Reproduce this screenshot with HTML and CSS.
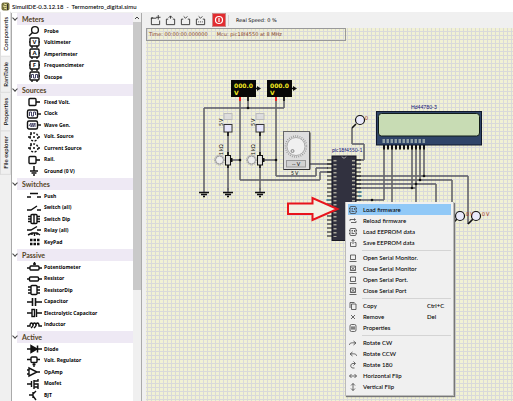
FILE: index.html
```html
<!DOCTYPE html>
<html lang="en">
<head>
<meta charset="utf-8">
<title>SimulIDE-0.3.12.18 - Termometro_digital.simu</title>
<link rel="stylesheet" href="styles.css">
</head>
<body>
<svg class="symbols" aria-hidden="true">
  <symbol id="probe" viewBox="0 0 16 12"><circle cx="9" cy="5" r="3.4"/><path d="M6.500 7.500L3 11"/></symbol>
  <symbol id="meter" viewBox="0 0 16 12"><rect x="4" y="1" width="9" height="8" rx="1"/><path d="M6 9v2M11 9v2M3 5h1M13 5h1"/></symbol>
  <symbol id="pulse" viewBox="0 0 16 12"><path class="thin" d="M5.500 7V3.500h2V7h2V3.500h2V7"/></symbol>
  <symbol id="fixed" viewBox="0 0 16 12"><rect x="3" y="2.500" width="7" height="7" rx="1"/><path d="M10 6h4" stroke-width="1.600"/></symbol>
  <symbol id="clock" viewBox="0 0 16 12"><rect x="1.500" y="2" width="10" height="8" rx="1.500"/><path d="M12 6h3"/><path class="thin" d="M3.500 8V4h2v4h2V4h2v3"/></symbol>
  <symbol id="wave" viewBox="0 0 16 12"><rect x="1.500" y="2" width="10" height="8" rx="1.500"/><path d="M12 6h3"/><path class="thin" d="M3 7l2-3v4l2-4v4l2-4v4"/></symbol>
  <symbol id="source" viewBox="0 0 16 12"><circle cx="8" cy="6" r="4" stroke-dasharray="2 1.500"/><path d="M2 6h3M7 6h2M12 6h2M5 1v2"/></symbol>
  <symbol id="ground" viewBox="0 0 16 12"><path d="M8 1v5M4 6h8M5.500 8h5M7 10h2" stroke-width="1.500"/></symbol>
  <symbol id="push" viewBox="0 0 16 12"><path d="M1 7h4M11 7h4M4 3.500h8"/></symbol>
  <symbol id="switch" viewBox="0 0 16 12"><path d="M1 8h4l6-4M11 8h4"/></symbol>
  <symbol id="dip" viewBox="0 0 16 12"><rect x="5" y="1.500" width="6" height="9" rx="1"/><path d="M2 3.500h3M2 6h3M2 8.500h3M11 3.500h3M11 6h3M11 8.500h3M8 2v8"/></symbol>
  <symbol id="relay" viewBox="0 0 16 12"><path d="M1 5h4l6-3.500M11 5h4M2 10l4-2h5l3 2M6 8v2M8.500 8v3M11 8v2"/></symbol>
  <symbol id="keypad" viewBox="0 0 16 12"><path d="M4 4h2.500M7.500 4H10M11 4h2.500M4 8h2.500M7.500 8H10M11 8h2.500" stroke-width="2.500"/></symbol>
  <symbol id="pot" viewBox="0 0 16 12"><rect x="4" y="5" width="9" height="4" rx="1"/><path d="M1 7h3M13 7h3M8.500 1v3M7 3h3"/></symbol>
  <symbol id="resistor" viewBox="0 0 16 12"><rect x="3.500" y="4" width="9" height="4" rx="1"/><path d="M1 6h2.500M12.500 6H16"/></symbol>
  <symbol id="resdip" viewBox="0 0 16 12"><rect x="5" y="1.500" width="6" height="9" rx="1"/><path d="M2 3h3M2 6h3M2 9h3M11 3h3M11 6h3M11 9h3"/></symbol>
  <symbol id="cap" viewBox="0 0 16 12"><path d="M1 6h5M10 6h6M6.500 2v8M9.500 2v8" stroke-width="1.600"/></symbol>
  <symbol id="ecap" viewBox="0 0 16 12"><rect x="6" y="2.500" width="2.500" height="7"/><path d="M1 6h5M10.500 6H16M10.500 2v8"/></symbol>
  <symbol id="coil" viewBox="0 0 16 12"><path d="M1 7h3c0-4 3-4 3 0c0-4 3-4 3 0c0-4 3-4 3 0h3M5 9l2-2M8 9l2-2"/></symbol>
  <symbol id="diode" viewBox="0 0 16 12"><path d="M1 6h15M11.500 2.500v7" stroke-width="1.500"/><path class="solid" d="M5 2.500L11 6L5 9.500z"/></symbol>
  <symbol id="reg" viewBox="0 0 16 12"><rect x="5" y="2" width="6" height="5.500" rx="1"/><path d="M1 4.500h4M11 4.500h3M8 8v4M6.500 9.500h3"/></symbol>
  <symbol id="opamp" viewBox="0 0 16 12"><path d="M3 2v8l8-4zM1 4h2M1 8h2M11 6h3"/></symbol>
  <symbol id="mosfet" viewBox="0 0 16 12"><path d="M1 6h4M5.500 3v6M8 2v9M8 3h4V1M8 6h4v5M8 9h4"/></symbol>
  <symbol id="bjt" viewBox="0 0 16 12"><path d="M3 6h4M7 3v6M7 5l3-3M7 7l3 4"/></symbol>
  <symbol id="new" viewBox="0 0 12 12"><path d="M7 3.500H1.500v7h9V6M1.500 4.500V3h2M9 0v5M6.500 2.500h5"/></symbol>
  <symbol id="open" viewBox="0 0 12 12"><path d="M3.500 4.500h-2v6h9v-6h-2M4 3l2-2l2 2M6 1v3"/></symbol>
  <symbol id="save" viewBox="0 0 12 12"><path d="M3.500 4.500h-2v6h9v-6h-2M4 1.500l2 2l2-2"/></symbol>
  <symbol id="saveas" viewBox="0 0 12 12"><path d="M3.500 4.500h-2v6h9v-6h-2M4 1.500l2 2l2-2M3.500 7.500h1M5.500 7.500h1M7.500 7.500h1"/></symbol>
  <symbol id="chip" viewBox="0 0 8 8"><rect x="1" y=".5" width="6" height="7" rx="1"/><path d="M2.500 2.500h1.500M2.500 4h1.500M2.500 5.500h3M5.500 2v2M0 2.500h1M0 5.500h1M7 2.500h1M7 5.500h1"/></symbol>
  <symbol id="reload" viewBox="0 0 8 8"><path d="M1 4V2.500h5M7 4v1.500H2M5 1.500l1.500 1L5 3.500"/></symbol>
  <symbol id="export" viewBox="0 0 8 8"><path d="M2.500 3.500h-1v4h5.500v-4H5.500M4 5V.5M2.500 2L4 .5L5.500 2"/></symbol>
  <symbol id="screen" viewBox="0 0 8 8"><path d="M1.500 1h5v4.500h-5zM.5 7.500h7"/></symbol>
  <symbol id="noscreen" viewBox="0 0 8 8"><path d="M1.500 1h5v4.500h-5zM.5 7.500h7M2 1.500l4 4M6 1.500l-4 4"/></symbol>
  <symbol id="copy" viewBox="0 0 8 8"><path d="M2.500 2h4.500v5.500H2.500zM1 6V.5h4.500"/></symbol>
  <symbol id="remove" viewBox="0 0 8 8"><path d="M2 2l4 4M6 2L2 6"/></symbol>
  <symbol id="props" viewBox="0 0 8 8"><rect x="1" y=".5" width="6" height="7" rx="1.500"/><path d="M3 2v4M5 2v4M2 4h4"/></symbol>
  <symbol id="cw" viewBox="0 0 8 8"><path d="M.5 6c0-2 1.500-2.500 6-2M4.500 2L7 4L4.500 6"/></symbol>
  <symbol id="ccw" viewBox="0 0 8 8"><path d="M7.500 6c0-2-1.500-2.500-6-2M3.500 2L1 4l2.500 2"/></symbol>
  <symbol id="half" viewBox="0 0 8 8"><path d="M6 2.500H4c-3 0-3 4.500 0 4.500h1.500M4.500.5l2 2l-2 2"/></symbol>
  <symbol id="hflip" viewBox="0 0 8 8"><path d="M.5 4h7M2.500 2l-2 2l2 2M5.500 2l2 2l-2 2"/></symbol>
  <symbol id="vflip" viewBox="0 0 8 8"><path d="M4 .5v7M2 2.500l2-2l2 2M2 5.500l2 2l2-2"/></symbol>
</svg>

<header class="titlebar">
  <svg class="logo" viewBox="0 0 9 9"><rect x=".5" y=".5" width="8" height="8" rx="2" fill="#77733f"/><path d="M3 2l3 1M2 4l4 1M3 6l3 1" stroke="#eee8a0" fill="none"/><path d="M6.500 2v6" stroke="#333"/></svg>
  <h1>SimulIDE-0.3.12.18 &nbsp;- &nbsp;Termometro_digital.simu</h1>
</header>

<main class="workspace">
  <nav class="tabs" aria-label="Panels">
    <button class="tab active">Components</button>
    <button class="tab">RamTable</button>
    <button class="tab">Properties</button>
    <button class="tab">File explorer</button>
  </nav>

  <aside class="panel">
    <div class="tree">
      <details open><summary>Meters</summary><ul>
        <li><svg><use href="#probe"/></svg>Probe</li>
        <li><svg><use href="#meter"/><text x="8.500" y="7">V</text></svg>Voltimeter</li>
        <li><svg><use href="#meter"/><text x="8.500" y="7">A</text></svg>Amperimeter</li>
        <li><svg><use href="#meter"/><text x="8.500" y="7">F</text></svg>Frequencimeter</li>
        <li><svg><use href="#meter"/><use href="#pulse"/></svg>Oscope</li>
      </ul></details>
      <details open><summary>Sources</summary><ul>
        <li><svg><use href="#fixed"/></svg>Fixed Volt.</li>
        <li><svg><use href="#clock"/></svg>Clock</li>
        <li><svg><use href="#wave"/></svg>Wave Gen.</li>
        <li><svg><use href="#source"/></svg>Volt. Source</li>
        <li><svg><use href="#source"/></svg>Current Source</li>
        <li><svg><use href="#fixed"/></svg>Rail.</li>
        <li><svg><use href="#ground"/></svg>Ground (0 V)</li>
      </ul></details>
      <details open><summary>Switches</summary><ul>
        <li><svg><use href="#push"/></svg>Push</li>
        <li><svg><use href="#switch"/></svg>Switch (all)</li>
        <li><svg><use href="#dip"/></svg>Switch Dip</li>
        <li><svg><use href="#relay"/></svg>Relay (all)</li>
        <li><svg><use href="#keypad"/></svg>KeyPad</li>
      </ul></details>
      <details open><summary>Passive</summary><ul>
        <li><svg><use href="#pot"/></svg>Potentiometer</li>
        <li><svg><use href="#resistor"/></svg>Resistor</li>
        <li><svg><use href="#resdip"/></svg>ResistorDip</li>
        <li><svg><use href="#cap"/></svg>Capacitor</li>
        <li><svg><use href="#ecap"/></svg>Electrolytic Capacitor</li>
        <li><svg><use href="#coil"/></svg>Inductor</li>
      </ul></details>
      <details open><summary>Active</summary><ul>
        <li><svg><use href="#diode"/></svg>Diode</li>
        <li><svg><use href="#reg"/></svg>Volt. Regulator</li>
        <li><svg><use href="#opamp"/></svg>OpAmp</li>
        <li><svg><use href="#mosfet"/></svg>Mosfet</li>
        <li><svg><use href="#bjt"/></svg>BJT</li>
      </ul></details>
    </div>
    <div class="scrollbar"><svg viewBox="0 0 8 9"><path d="M2 6l2-2l2 2" fill="none" stroke="#444"/></svg><div class="thumb"></div></div>
  </aside>

  <section class="editor">
    <div class="toolbar">
      <button aria-label="New"><svg><use href="#new"/></svg></button>
      <button aria-label="Open"><svg><use href="#open"/></svg></button>
      <button aria-label="Save"><svg><use href="#save"/></svg></button>
      <button aria-label="Save as"><svg><use href="#saveas"/></svg></button>
      <button class="power" aria-label="Power"><svg viewBox="0 0 12 12"><circle cx="6" cy="6" r="3.500"/><path d="M6 4v4"/></svg></button>
      <span class="speed">Real Speed: 0 %</span>
    </div>

    <div class="canvas">
      <div class="status"><span>Time: 00:00:00.000000</span><span>Mcu: pic18f4550 at 8 MHz</span></div>
      <svg class="circuit" viewBox="146 28 367 373">
        <defs>
          <g id="gnd"><path d="M0 0v4" class="wire"/><path class="pin" d="M-5 4.500h10M-3 6.500h6M-1 8.500h2"/></g>
          <g id="volt"><path d="M9 17v8M17 17v11" class="wire"/><path d="M9 17v4" stroke="#e22" stroke-width="2"/><path d="M17 17v4" class="pin"/><rect width="25" height="17" fill="#080808"/><path d="M25 8.500h2" class="pin"/><path d="M26 6v5l4-2.500z"/><text class="led" x="3" y="8">000.0</text><text class="led" x="3" y="15">V</text></g>
          <g id="supply">
            <rect x="-4" y="113.500" width="8" height="6" fill="#ddd" stroke="#bbb"/>
            <path class="wire" d="M0 132v58"/>
            <rect x="-4" y="124.500" width="8" height="7.500" fill="#e6e6fa" stroke="#333"/>
            <path d="M0 132v4M0 152v3M0 165v3" class="pin"/>
            <rect x="-2.500" y="155.500" width="5" height="9.500" fill="#e0e0dc" stroke="#111"/>
            <circle cx="-8.500" cy="160" r="5" fill="#ddd" stroke="#999" stroke-dasharray="1 1"/>
            <circle cx="-8.500" cy="160" r="4" fill="#eee" stroke="#999"/>
            <path d="M4 158v4l-2-2z" stroke="#111"/>
            <text class="tiny" transform="translate(-5 126) rotate(-90)">5 V</text>
            <text class="tiny" transform="translate(-5 155) rotate(-90)">1 kΩ</text>
            <use href="#gnd" y="188"/>
          </g>
        </defs>
        <path class="line" d="M204 108h80M240 180h80M276 176h40M309 164h23M320 172h12M316 168h12M356 176h112M356 180h96M356 184h80M356 188h60M356 200h28M352 144h12M356 160h8M230 160h10M262 160h14"/>
        <path class="wire" d="M204 108v80M240 105v75M276 105v71M320 180v-8M316 176v-8M364 160v-16M352 144v-16M384 149v51M392 149v60M412 149v39M416 149v60M416 149v35M420 149v31M424 149v27M436 184v30M452 180v44M468 176v48"/>
        <path class="pin" d="M352 128l4-4M468 224l5-5M452 224l5-5"/>
        <use href="#gnd" x="204" y="188"/>
        <use href="#volt" x="231" y="80"/><use href="#volt" x="267" y="80"/>
        <use href="#supply" x="228"/><use href="#supply" x="260"/>
        <g><circle cx="248" cy="108" r="1.300"/><circle cx="240" cy="160" r="1.300"/><circle cx="276" cy="160" r="1.300"/><circle cx="372" cy="200" r="1.300"/><circle cx="412" cy="188" r="1.300"/><circle cx="416" cy="184" r="1.300"/><circle cx="420" cy="180" r="1.300"/><circle cx="424" cy="176" r="1.300"/></g>
        <rect x="283.500" y="131.500" width="26" height="38" fill="#dedede" stroke="#666"/>
        <path d="M284 169.500h26v-37" fill="none" stroke="#333"/>
        <circle cx="296" cy="146.500" r="10.500" fill="none" stroke="#888" stroke-width="1.500" stroke-dasharray=".7 1.500"/>
        <circle cx="296" cy="146.500" r="9" fill="#f0f0f0" stroke="#aaa"/>
        <circle cx="292.500" cy="151" r="1.500" fill="#ddd" stroke="#888"/>
        <rect x="286.500" y="160.500" width="19" height="6.500" fill="#d2d2d2" stroke="#999"/>
        <text class="tiny" x="292" y="166">-- V</text><text class="tiny" x="291" y="175">5 V</text>
        <path class="pins" d="M344 159.500v78"/>
        <path d="M358 192h4M358 196h4M326 200h4" stroke="#38a"/>
        <rect x="332" y="156" width="24" height="84.500" fill="#31313f" stroke="#171722"/>
        <path d="M342 156.500c0 2 4 2 4 0" fill="none" stroke="#aaa"/>
        <path d="M335 160v77M353.500 160v77" stroke="#aaa89c" stroke-width="3" stroke-dasharray="1.500 2.500" fill="none"/>
        <text class="part" x="332" y="152">pic18f4550-1</text>
        <g fill="#e9e9fb" stroke="#111" stroke-width="1.200"><circle cx="360" cy="120" r="4.500"/><circle cx="460" cy="216" r="4.500"/><circle cx="476" cy="216" r="4.500"/></g>
        <text class="value" x="365" y="120">0</text><text class="value" x="466" y="216">0 V</text><text class="value" x="482" y="216">0 V</text>
        <text class="part" x="411" y="109">Hd44780-3</text>
        <path d="M383 147h43" stroke="#111" stroke-width="5" stroke-dasharray="2 2" fill="none"/>
        <rect x="376.500" y="111.500" width="105" height="33.500" fill="#2f4468" stroke="#10182c"/>
        <rect x="378.500" y="113.500" width="101" height="22.500" rx="3" fill="#c8dcb4" stroke="#111c18"/>
        <path d="M382.500 141h43" stroke="#8fa0a5" stroke-width="4" stroke-dasharray="2.500 1.500" fill="none"/>
        <path class="arrow" d="M288 203.500h24.500v-5.500l25 11l-25 11v-6H288z"/>
      </svg>

      <ul class="menu" role="menu">
        <li><button class="current"><svg><use href="#chip"/></svg>Load firmware</button></li>
        <li><button><svg><use href="#reload"/></svg>Reload firmware</button></li>
        <li><button><svg><use href="#chip"/></svg>Load EEPROM data</button></li>
        <li><button><svg><use href="#export"/></svg>Save EEPROM data</button></li>
        <li class="rule" role="separator"></li>
        <li><button><svg><use href="#screen"/></svg>Open Serial Monitor.</button></li>
        <li><button><svg><use href="#noscreen"/></svg>Close Serial Monitor</button></li>
        <li><button><svg><use href="#screen"/></svg>Open Serial Port.</button></li>
        <li><button><svg><use href="#noscreen"/></svg>Close Serial Port</button></li>
        <li class="rule" role="separator"></li>
        <li><button><svg><use href="#copy"/></svg>Copy<kbd>Ctrl+C</kbd></button></li>
        <li><button><svg><use href="#remove"/></svg>Remove<kbd>Del</kbd></button></li>
        <li><button><svg><use href="#props"/></svg>Properties</button></li>
        <li class="rule" role="separator"></li>
        <li><button><svg><use href="#cw"/></svg>Rotate CW</button></li>
        <li><button><svg><use href="#ccw"/></svg>Rotate CCW</button></li>
        <li><button><svg><use href="#half"/></svg>Rotate 180</button></li>
        <li><button><svg><use href="#hflip"/></svg>Horizontal Flip</button></li>
        <li><button><svg><use href="#vflip"/></svg>Vertical Flip</button></li>
      </ul>
    </div>
  </section>
</main>
</body>
</html>
```
FILE: styles.css
```css
* { box-sizing: border-box; }
body {
  margin: 0;
  height: 100vh;
  display: flex;
  flex-direction: column;
  overflow: hidden;
  background: #f0f0f0;
  color: #000;
  font: 500 6px/11px Lato, "Open Sans", sans-serif;
}
ul { list-style: none; margin: 0; padding: 0; }
button { font: inherit; color: inherit; border: 0; padding: 0; background: none; }
svg { fill: none; stroke: #111; flex: none; }
.symbols { display: none; }
.thin { stroke-width: 1px; stroke: #446; }
.solid { fill: #111; }

.titlebar { flex: none; height: 12px; padding-left: 1px; display: flex; align-items: center; gap: 2px; background: #fff; }
.titlebar h1 { margin: 0; font-size: 6px; font-weight: 500; }
.logo { width: 9px; height: 9px; stroke: none; }

.workspace { flex: 1; min-height: 0; display: flex; }
.tabs { width: 11px; display: flex; flex-direction: column; align-items: stretch; }
.tab {
  writing-mode: vertical-rl;
  transform: rotate(180deg);
  line-height: 10px;
  padding: 5px 0;
  text-align: center;
  border: 1px solid #dcdcdc;
  border-bottom-width: 0;
}
.tab.active { background: #fff; }

.panel { width: 131px; display: flex; margin-top: 1px; background: #fff; border: 1px solid #aaa; border-width: 0 1px; }
.tree { flex: 1; min-width: 0; overflow: hidden; font-family: "Open Sans", sans-serif; font-size: 5px; font-weight: 700; }
.tree details { margin-bottom: 1px; }
.tree summary {
  display: block;
  height: 12px;
  margin-left: 5px;
  padding-left: 5px;
  line-height: 12px;
  font-family: Lato, sans-serif;
  font-size: 7px;
  font-weight: 700;
  color: #54431f;
  background: #eee9f4;
  position: relative;
}
.tree summary::before {
  content: "";
  position: absolute;
  left: -4px;
  top: 3px;
  width: 3px;
  height: 3px;
  border: solid #444;
  border-width: 0 1px 1px 0;
  transform: rotate(45deg);
}
.tree li { height: 12px; padding-left: 14px; display: flex; align-items: center; gap: 2px; }
.tree li:nth-child(even) { height: 11px; }
.tree svg { width: 16px; height: 12px; stroke-width: 1.4px; }
.tree text { font-size: 6px; text-anchor: middle; fill: #111; stroke: none; }
.scrollbar { width: 8px; background: #f0f0f0; display: flex; flex-direction: column; }
.scrollbar svg { width: 8px; height: 9px; }
.thumb { height: 69%; background: #c9c9c9; }

.editor { flex: 1; min-width: 0; display: flex; flex-direction: column; padding-left: 4px; }
.toolbar { height: 16px; flex: none; display: flex; align-items: center; gap: 3px; padding-left: 3px; }
.toolbar button { width: 12px; height: 12px; display: flex; align-items: center; justify-content: center; }
.toolbar svg { width: 11px; height: 11px; stroke: #333; }
.toolbar .power { background: #e22c30; margin-left: 4px; outline: 1px solid #c88; }
.toolbar .power svg { stroke: #fff; width: 12px; height: 12px; stroke-width: 1.2px; }
.speed { border-left: 1px solid #d4d4d4; padding-left: 7px; font-family: "DejaVu Sans", sans-serif; font-size: 5px; }

.canvas {
  flex: 1;
  position: relative;
  overflow: hidden;
  background: linear-gradient(#d9d9da 1px, transparent 1px) 0 3px / 4px 4px, linear-gradient(90deg, #d9d9da 1px, transparent 1px) 1px 0 / 4px 4px, #f1f1d4;
}
.status {
  width: 200px;
  height: 13px;
  padding-left: 2px;
  display: flex;
  align-items: center;
  gap: 9px;
  border: 1px solid #999;
  color: #84401f;
  font-family: "DejaVu Sans", sans-serif;
  font-size: 5px;
}
.circuit { position: absolute; left: 0; top: 0; width: 367px; height: 373px; stroke: none; fill: #111; }
.wire { stroke: #66666c; stroke-width: 1.6px; fill: none; }
.line { stroke: #15152c; stroke-width: 1.2px; fill: none; }
.pin { stroke: #111; stroke-width: 1.6px; fill: none; }
.pins { stroke: #111; stroke-width: 34px; stroke-dasharray: 1 3; fill: none; }
.circuit text { stroke: none; font-size: 5px; }
.circuit .led { fill: #f2e820; font: 700 6px "DejaVu Sans", sans-serif; }
.circuit .part { fill: #22227a; }
.circuit .value { fill: #a33b22; }
.arrow { fill: #f1f1e4; stroke: #e8141c; stroke-width: 2px; }

.menu {
  position: absolute;
  left: 199px;
  top: 174px;
  width: 109px;
  padding: 2px 2px 3px;
  background: #f0f0f0;
  border: 1px solid #bbb;
  border-top-width: 0;
  box-shadow: 1px 1px 1px #777;
}
.menu button { width: 100%; height: 11px; display: flex; align-items: center; text-align: left; white-space: nowrap; }
.menu .current { background: #91c9f7; }
.menu svg { width: 8px; height: 8px; margin: 0 6px 0 1px; stroke: #444; stroke-width: .8px; }
.menu kbd { font: inherit; margin-left: auto; width: 24px; }
.menu .rule { height: 1px; margin: 2px 0 1px 14px; background: #d4d4d4; }
```
